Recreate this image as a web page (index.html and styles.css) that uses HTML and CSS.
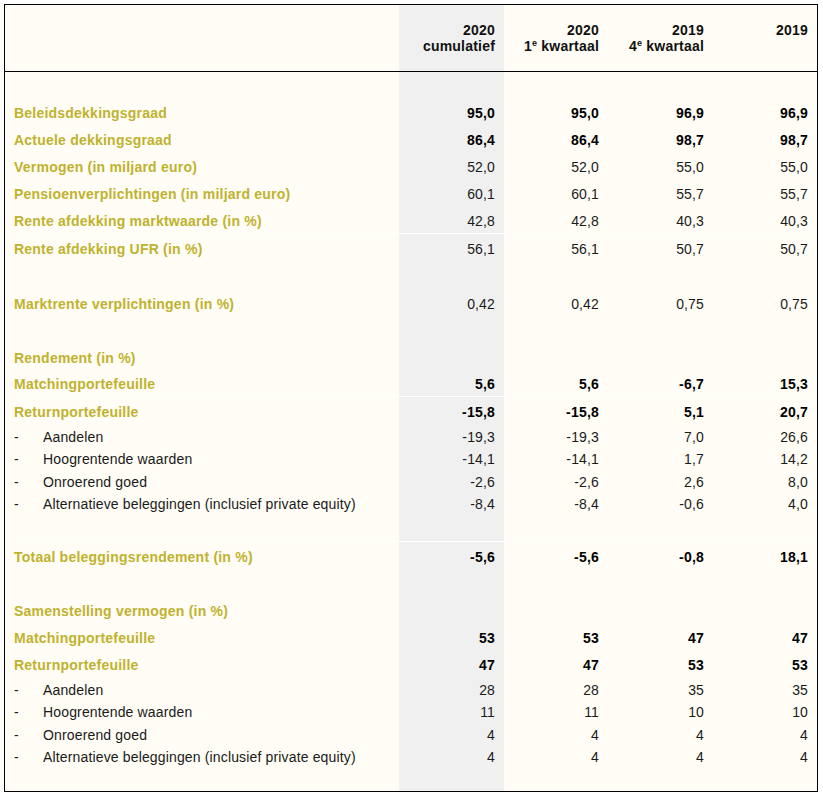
FILE: index.html
```
<!DOCTYPE html>
<html lang="nl">
<head>
<meta charset="utf-8">
<title>Kerncijfers</title>
<link rel="stylesheet" href="styles.css">
</head>
<body>
<div class="frame">
<table class="kt">
<colgroup>
<col class="c-label"><col class="c-cum"><col class="c-q1"><col class="c-q4"><col class="c-yr">
</colgroup>
<thead>
<tr class="head">
<th></th>
<th class="num shade">2020<br>cumulatief</th>
<th class="num">2020<br>1<sup>e</sup> kwartaal</th>
<th class="num">2019<br>4<sup>e</sup> kwartaal</th>
<th class="num">2019</th>
</tr>
</thead>
<tbody>
<tr class="blank"><td></td><td class="shade"></td><td></td><td></td><td></td></tr>
<tr class="main"><td class="lbl">Beleidsdekkingsgraad</td><td class="num shade b">95,0</td><td class="num b">95,0</td><td class="num b">96,9</td><td class="num b">96,9</td></tr>
<tr class="main"><td class="lbl">Actuele dekkingsgraad</td><td class="num shade b">86,4</td><td class="num b">86,4</td><td class="num b">98,7</td><td class="num b">98,7</td></tr>
<tr class="main"><td class="lbl">Vermogen (in miljard euro)</td><td class="num shade">52,0</td><td class="num">52,0</td><td class="num">55,0</td><td class="num">55,0</td></tr>
<tr class="main"><td class="lbl">Pensioenverplichtingen (in miljard euro)</td><td class="num shade">60,1</td><td class="num">60,1</td><td class="num">55,7</td><td class="num">55,7</td></tr>
<tr class="main"><td class="lbl">Rente afdekking marktwaarde (in %)</td><td class="num shade">42,8</td><td class="num">42,8</td><td class="num">40,3</td><td class="num">40,3</td></tr>
<tr class="main ruled"><td class="lbl">Rente afdekking UFR (in %)</td><td class="num shade">56,1</td><td class="num">56,1</td><td class="num">50,7</td><td class="num">50,7</td></tr>
<tr class="blank"><td></td><td class="shade"></td><td></td><td></td><td></td></tr>
<tr class="main"><td class="lbl">Marktrente verplichtingen (in %)</td><td class="num shade">0,42</td><td class="num">0,42</td><td class="num">0,75</td><td class="num">0,75</td></tr>
<tr class="blank"><td></td><td class="shade"></td><td></td><td></td><td></td></tr>
<tr class="main"><td class="lbl">Rendement (in %)</td><td class="shade"></td><td></td><td></td><td></td></tr>
<tr class="main short"><td class="lbl">Matchingportefeuille</td><td class="num shade b">5,6</td><td class="num b">5,6</td><td class="num b">-6,7</td><td class="num b">15,3</td></tr>
<tr class="main ruled"><td class="lbl">Returnportefeuille</td><td class="num shade b">-15,8</td><td class="num b">-15,8</td><td class="num b">5,1</td><td class="num b">20,7</td></tr>
<tr class="sub"><td class="item"><span class="dash">-</span>Aandelen</td><td class="num shade">-19,3</td><td class="num">-19,3</td><td class="num">7,0</td><td class="num">26,6</td></tr>
<tr class="sub"><td class="item"><span class="dash">-</span>Hoogrentende waarden</td><td class="num shade">-14,1</td><td class="num">-14,1</td><td class="num">1,7</td><td class="num">14,2</td></tr>
<tr class="sub"><td class="item"><span class="dash">-</span>Onroerend goed</td><td class="num shade">-2,6</td><td class="num">-2,6</td><td class="num">2,6</td><td class="num">8,0</td></tr>
<tr class="sub"><td class="item"><span class="dash">-</span>Alternatieve beleggingen (inclusief private equity)</td><td class="num shade">-8,4</td><td class="num">-8,4</td><td class="num">-0,6</td><td class="num">4,0</td></tr>
<tr class="blank short"><td></td><td class="shade"></td><td></td><td></td><td></td></tr>
<tr class="main ruled"><td class="lbl">Totaal beleggingsrendement (in %)</td><td class="num shade b">-5,6</td><td class="num b">-5,6</td><td class="num b">-0,8</td><td class="num b">18,1</td></tr>
<tr class="blank"><td></td><td class="shade"></td><td></td><td></td><td></td></tr>
<tr class="main"><td class="lbl">Samenstelling vermogen (in %)</td><td class="shade"></td><td></td><td></td><td></td></tr>
<tr class="main"><td class="lbl">Matchingportefeuille</td><td class="num shade b">53</td><td class="num b">53</td><td class="num b">47</td><td class="num b">47</td></tr>
<tr class="main"><td class="lbl">Returnportefeuille</td><td class="num shade b">47</td><td class="num b">47</td><td class="num b">53</td><td class="num b">53</td></tr>
<tr class="sub"><td class="item"><span class="dash">-</span>Aandelen</td><td class="num shade">28</td><td class="num">28</td><td class="num">35</td><td class="num">35</td></tr>
<tr class="sub"><td class="item"><span class="dash">-</span>Hoogrentende waarden</td><td class="num shade">11</td><td class="num">11</td><td class="num">10</td><td class="num">10</td></tr>
<tr class="sub"><td class="item"><span class="dash">-</span>Onroerend goed</td><td class="num shade">4</td><td class="num">4</td><td class="num">4</td><td class="num">4</td></tr>
<tr class="sub"><td class="item"><span class="dash">-</span>Alternatieve beleggingen (inclusief private equity)</td><td class="num shade">4</td><td class="num">4</td><td class="num">4</td><td class="num">4</td></tr>
<tr class="tail"><td></td><td class="shade"></td><td></td><td></td><td></td></tr>
</tbody>
</table>
</div>
</body>
</html>
```

FILE: styles.css
```
html, body {
  margin: 0;
  padding: 0;
  background: #ffffff;
}

body {
  padding: 4px;
  font-family: "Liberation Sans", Arial, sans-serif;
  font-size: 14px;
  letter-spacing: 0.15px;
  color: #1a1a1a;
}

.frame {
  width: 812px;
  border: 1px solid #000;
  background: #fffdf5;
}

.kt {
  width: 812px;
  border-collapse: collapse;
  border-spacing: 0;
  table-layout: fixed;
}

.c-label { width: 394px; }
.c-cum { width: 105px; }
.c-q1 { width: 104px; }
.c-q4 { width: 105px; }
.c-yr { width: 104px; }

.kt th,
.kt td {
  padding: 0;
  white-space: nowrap;
}

.shade {
  background: #f0f0f0;
}

.head th {
  height: 66px;
  border-bottom: 1px solid #000;
  vertical-align: top;
  padding-top: 17px;
  box-sizing: border-box;
  line-height: 16px;
  font-weight: bold;
  letter-spacing: 0.2px;
  color: #111;
}

.head sup {
  font-size: 9px;
  line-height: 0;
  vertical-align: 5px;
}

.num {
  text-align: right;
  padding-right: 9px !important;
}

.b {
  font-weight: bold;
  letter-spacing: 0.2px;
  color: #000;
}

.main td,
.blank td {
  height: 27px;
  vertical-align: middle;
}

.main:not(.ruled) td {
  box-sizing: border-box;
  padding-top: 2px;
}

.main.short td,
.blank.short td {
  height: 26px;
}

.main.ruled td {
  height: 26px;
  padding-top: 2px;
  border-top: 1px solid #ffffff;
}

.sub td {
  height: 20.5px;
  padding-top: 2px;
  vertical-align: middle;
}

.tail td {
  height: 23px;
}

.lbl {
  padding-left: 9px !important;
  font-weight: bold;
  letter-spacing: 0.22px;
  color: #bfb22f;
}

.item {
  padding-left: 9px !important;
  color: #1a1a1a;
}

.dash {
  display: inline-block;
  width: 29px;
  letter-spacing: 0;
}
```
